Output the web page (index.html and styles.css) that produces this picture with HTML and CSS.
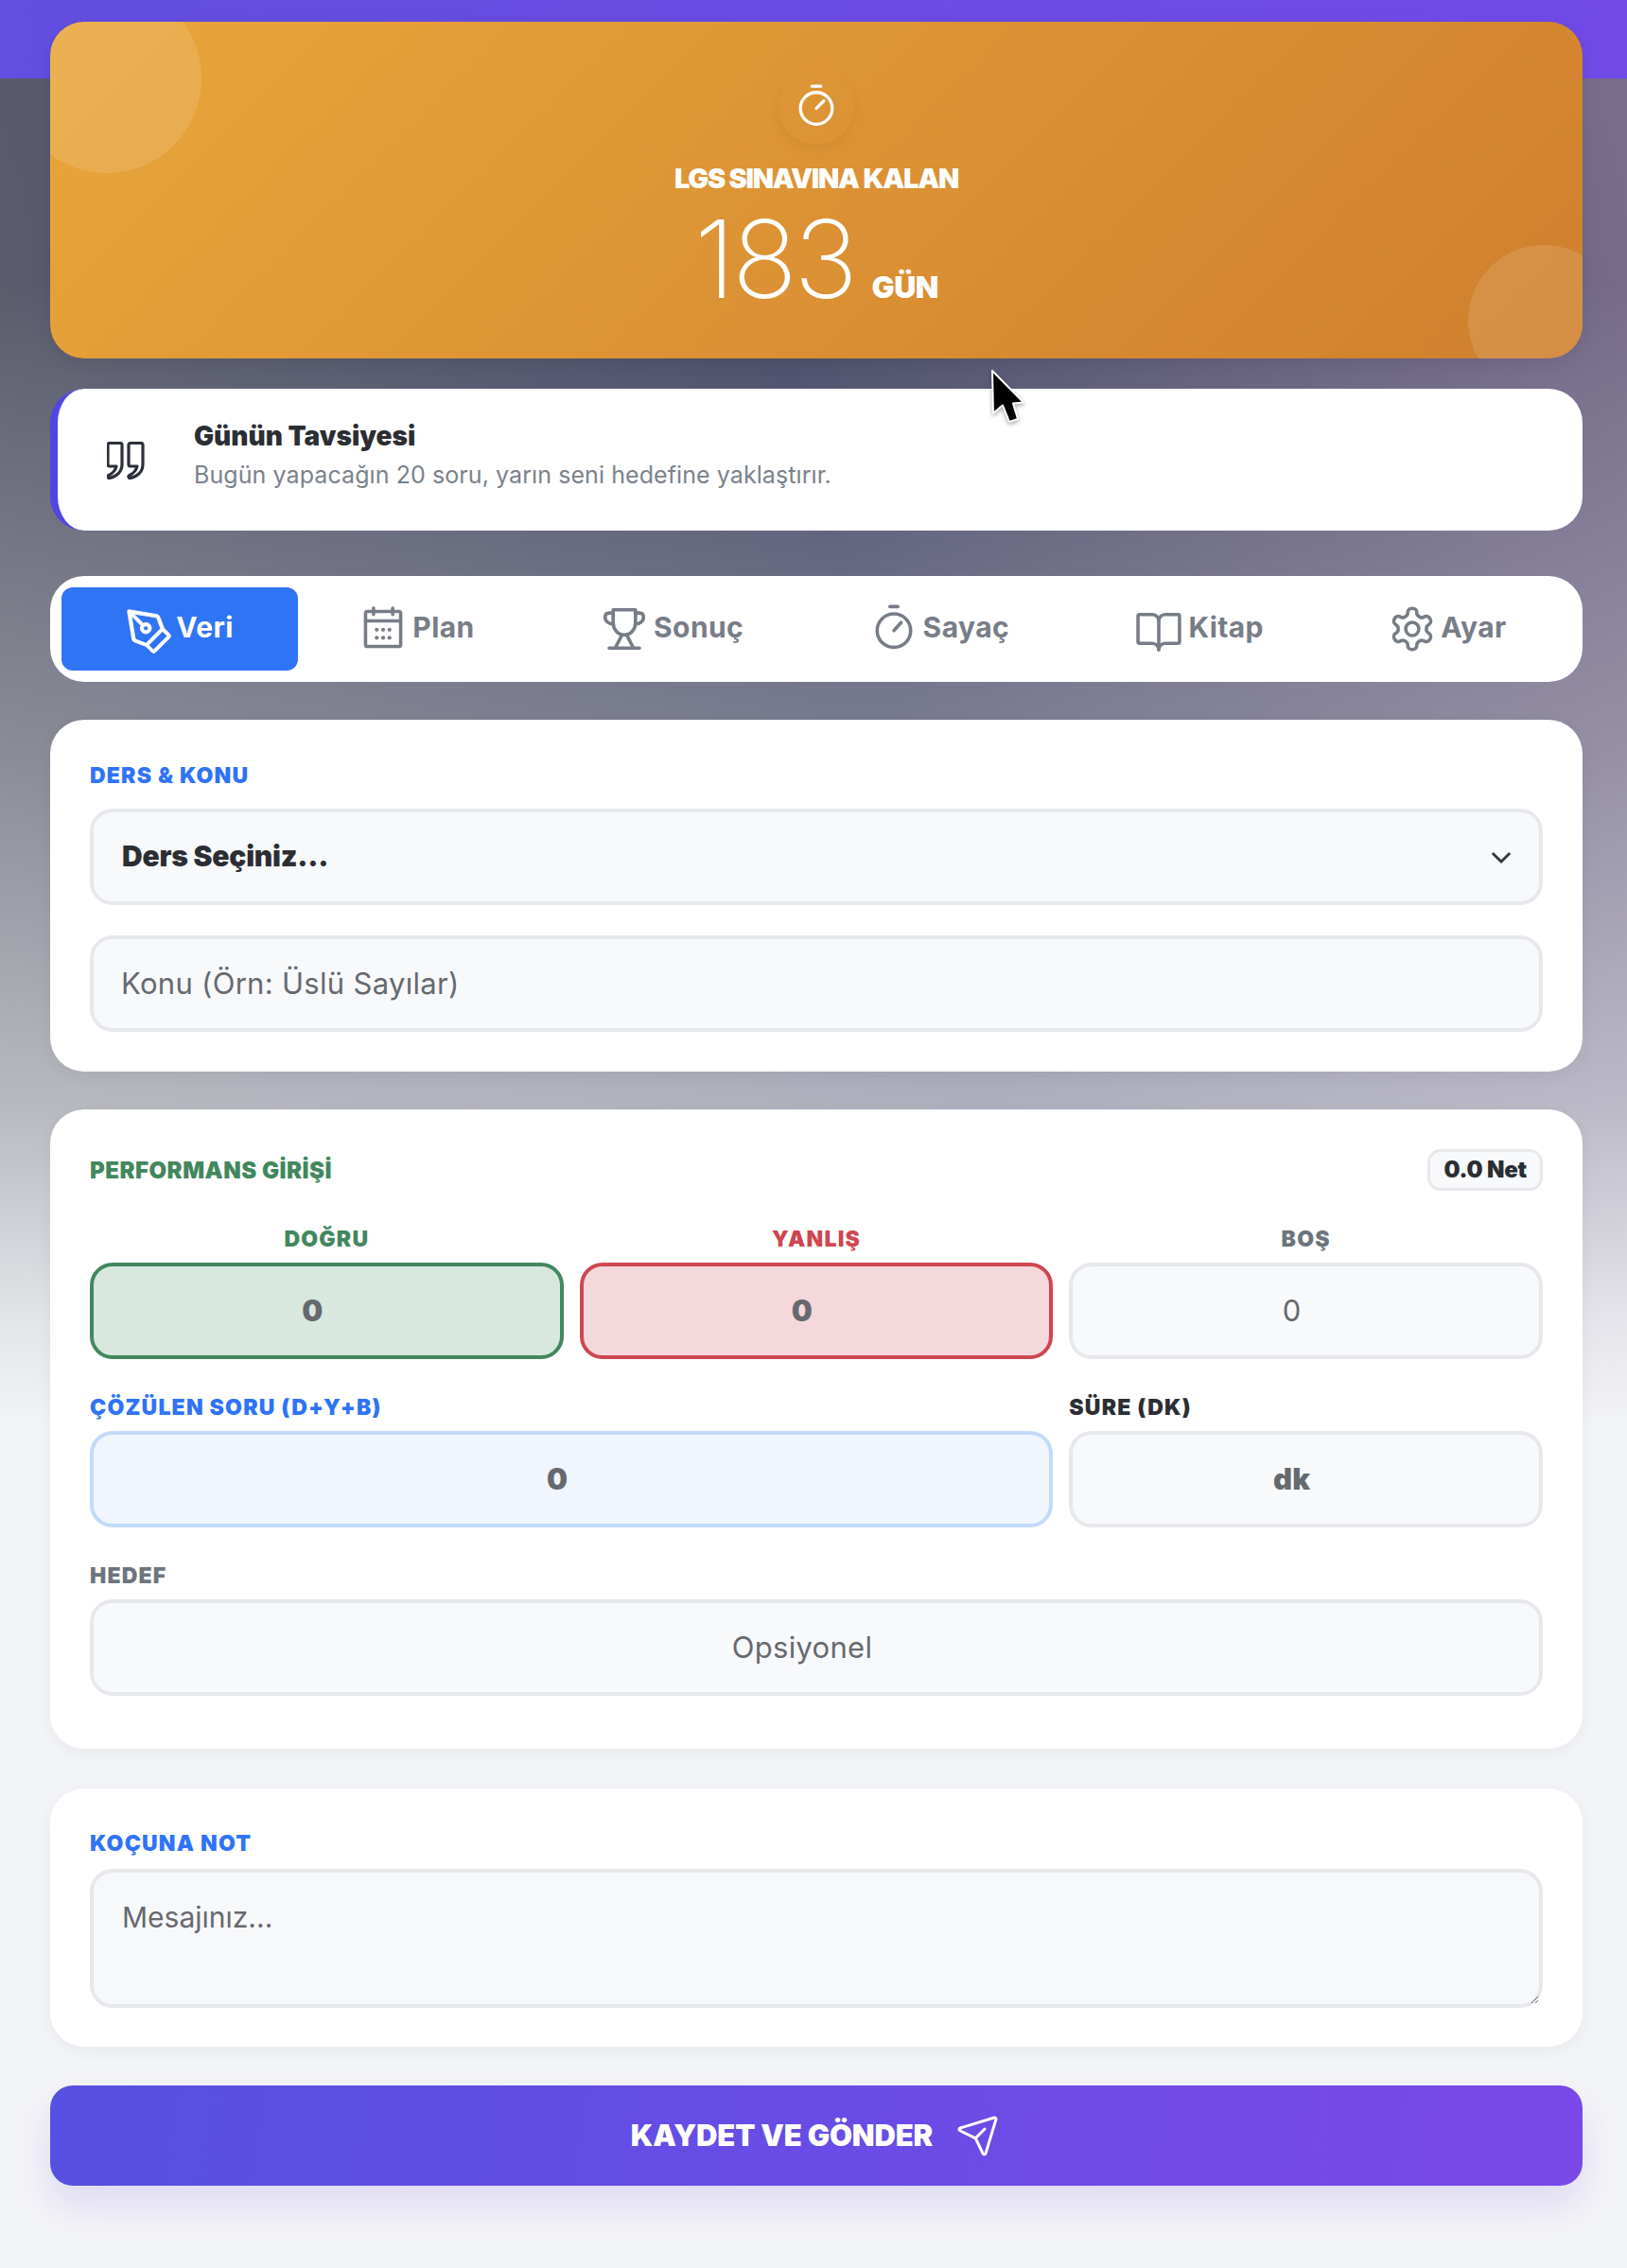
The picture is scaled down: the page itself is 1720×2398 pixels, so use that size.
FILE: index.html
```html
<!DOCTYPE html>
<html lang="tr">
<head>
<meta charset="UTF-8">
<meta name="viewport" content="width=device-width, initial-scale=1">
<title>LGS Takip</title>
<link rel="stylesheet" href="styles.css">
</head>
<body>
<div class="page">

  <section class="hero">
    <span class="blob blob-a"></span>
    <span class="blob blob-b"></span>
    <div class="hero-icon">
      <svg class="ic-hero" viewBox="0 0 256 256"><circle cx="128" cy="136" r="86"/><path d="M128 136l40-40M104 16h48"/></svg>
    </div>
    <div class="hero-label">LGS SINAVINA KALAN</div>
    <div class="hero-count"><span class="hero-num">183</span><span class="hero-unit">GÜN</span></div>
  </section>

  <section class="tip">
    <svg class="ic-quote" viewBox="0 0 40 40">
      <path d="M2.5 1.5H14a2 2 0 0 1 2 2V24C16 32 10 37 3 38.4a1.5 1.5 0 0 1-1-3C6 33.5 9 30.5 10 26H3a2 2 0 0 1-2-2V3.5a2 2 0 0 1 1.5-2z"/>
      <path d="M24.5 1.5H36a2 2 0 0 1 2 2V24C38 32 32 37 25 38.4a1.5 1.5 0 0 1-1-3C28 33.5 31 30.5 32 26H25a2 2 0 0 1-2-2V3.5a2 2 0 0 1 1.5-2z"/>
    </svg>
    <div>
      <div class="tip-title">Günün Tavsiyesi</div>
      <div class="tip-text">Bugün yapacağın 20 soru, yarın seni hedefine yaklaştırır.</div>
    </div>
  </section>

  <nav class="tabs">
    <a class="tab active">
      <svg class="ic ic-fill" viewBox="0 0 256 256"><path transform="rotate(90 128 128)" d="M248,92.68a15.86,15.86,0,0,0-4.69-11.31L174.63,12.68a16,16,0,0,0-22.63,0L123.57,41.11l-58,21.77A16.06,16.06,0,0,0,55.35,75.23L32.11,214.68A8,8,0,0,0,40,224a8.4,8.4,0,0,0,1.32-.11l139.44-23.24a16,16,0,0,0,12.35-10.17l21.77-58L243.31,104A15.87,15.87,0,0,0,248,92.68Zm-69.87,92.19L63.32,204l47.37-47.37a28,28,0,1,0-11.32-11.32L52,192.7,71.13,77.86,126,57.29,198.7,130ZM112,132a12,12,0,1,1,12,12A12,12,0,0,1,112,132Zm96-15.32L139.31,48l24-24L232,92.68Z"/></svg>
      <span class="tab-text">Veri</span>
    </a>
    <a class="tab">
      <svg class="ic" viewBox="0 0 256 256"><rect x="40" y="40" width="176" height="176" rx="10"/><path d="M176 24v32M80 24v32M40 88h176"/><g class="dots"><circle cx="96" cy="132" r="10"/><circle cx="128" cy="132" r="10"/><circle cx="160" cy="132" r="10"/><circle cx="96" cy="172" r="10"/><circle cx="128" cy="172" r="10"/><circle cx="160" cy="172" r="10"/></g></svg>
      <span class="tab-text">Plan</span>
    </a>
    <a class="tab">
      <svg class="ic" viewBox="0 0 256 256"><path d="M72 32H184V96C184 130 160 158 128 158C96 158 72 130 72 96Z"/><path d="M72 48H52C38 48 32 58 32 70C32 90 52 104 72 104M184 48H204C218 48 224 58 224 70C224 90 204 104 184 104"/><path d="M116 158L82 224M140 158L174 224M52 224H204"/></svg>
      <span class="tab-text">Sonuç</span>
    </a>
    <a class="tab">
      <svg class="ic" viewBox="0 0 256 256"><circle cx="128" cy="136" r="84"/><path d="M128 136l36-40M108 16h40"/></svg>
      <span class="tab-text">Sayaç</span>
    </a>
    <a class="tab">
      <svg class="ic" viewBox="0 0 256 256"><path d="M128 88a32 32 0 0 1 32-32h64a8 8 0 0 1 8 8v128a8 8 0 0 1-8 8h-64a32 32 0 0 0-32 32"/><path d="M24 192a8 8 0 0 0 8 8h64a32 32 0 0 1 32 32V88a32 32 0 0 0-32-32H32a8 8 0 0 0-8 8z"/></svg>
      <span class="tab-text">Kitap</span>
    </a>
    <a class="tab">
      <svg class="ic ic-thin" viewBox="0 0 24 24"><path d="M12.22 2h-.44a2 2 0 0 0-2 2v.18a2 2 0 0 1-1 1.73l-.43.25a2 2 0 0 1-2 0l-.15-.08a2 2 0 0 0-2.73.73l-.22.38a2 2 0 0 0 .73 2.73l.15.1a2 2 0 0 1 1 1.72v.51a2 2 0 0 1-1 1.74l-.15.09a2 2 0 0 0-.73 2.73l.22.38a2 2 0 0 0 2.73.73l.15-.08a2 2 0 0 1 2 0l.43.25a2 2 0 0 1 1 1.73V20a2 2 0 0 0 2 2h.44a2 2 0 0 0 2-2v-.18a2 2 0 0 1 1-1.73l.43-.25a2 2 0 0 1 2 0l.15.08a2 2 0 0 0 2.73-.73l.22-.39a2 2 0 0 0-.73-2.73l-.15-.08a2 2 0 0 1-1-1.74v-.5a2 2 0 0 1 1-1.74l.15-.09a2 2 0 0 0 .73-2.73l-.22-.38a2 2 0 0 0-2.73-.73l-.15.08a2 2 0 0 1-2 0l-.43-.25a2 2 0 0 1-1-1.73V4a2 2 0 0 0-2-2z"/><circle cx="12" cy="12" r="3.2"/></svg>
      <span class="tab-text">Ayar</span>
    </a>
  </nav>

  <section class="card card-subject">
    <label class="lbl lbl-blue">DERS &amp; KONU</label>
    <div class="select-wrap">
      <select class="field field-select"><option>Ders Seçiniz...</option></select>
      <svg class="chevron" viewBox="0 0 24 14"><path d="M2 2l10 10L22 2"/></svg>
    </div>
    <input class="field field-left" type="text" placeholder="Konu (Örn: Üslü Sayılar)">
  </section>

  <section class="card card-perf">
    <div class="perf-head">
      <span class="lbl lbl-green lbl-head">PERFORMANS GİRİŞİ</span>
      <span class="net">0.0 Net</span>
    </div>
    <div class="perf-grid">
      <div>
        <label class="lbl lbl-green lbl-mid">DOĞRU</label>
        <input class="field num strong f-green" type="text" placeholder="0">
      </div>
      <div>
        <label class="lbl lbl-red lbl-mid">YANLIŞ</label>
        <input class="field num strong f-red" type="text" placeholder="0">
      </div>
      <div>
        <label class="lbl lbl-gray lbl-mid">BOŞ</label>
        <input class="field num" type="text" placeholder="0">
      </div>
      <div class="span-2">
        <label class="lbl lbl-blue">ÇÖZÜLEN SORU (D+Y+B)</label>
        <input class="field num strong f-blue" type="text" placeholder="0">
      </div>
      <div>
        <label class="lbl lbl-dark">SÜRE (DK)</label>
        <input class="field num strong" type="text" placeholder="dk">
      </div>
      <div class="span-3">
        <label class="lbl lbl-gray">HEDEF</label>
        <input class="field num" type="text" placeholder="Opsiyonel">
      </div>
    </div>
  </section>

  <section class="card card-note">
    <label class="lbl lbl-blue">KOÇUNA NOT</label>
    <textarea class="field note" placeholder="Mesajınız..."></textarea>
  </section>

  <button class="send" type="button">
    KAYDET VE GÖNDER
    <svg class="ic-send" viewBox="0 0 256 256"><path d="M227.32,28.68a16,16,0,0,0-15.66-4.08l-.15,0L19.57,82.84a16,16,0,0,0-2.49,29.8L102,154l41.3,84.87A15.86,15.86,0,0,0,157.74,248q.69,0,1.38-.06a15.88,15.88,0,0,0,14-11.51l58.2-191.94c0-.05,0-.1,0-.15A16,16,0,0,0,227.32,28.68ZM157.83,231.85l-.05.14,0-.07-40.06-82.3,48-48a8,8,0,0,0-11.31-11.31l-48,48L24.08,98.25l-.07,0,.14,0L216,40Z"/></svg>
  </button>

</div>

<svg class="cursor" viewBox="0 0 36 60"><path d="M2 2L3 47L13 38.5L20 56L29 53L24 36.5L35 35.5Z"/></svg>
</body>
</html>
```

FILE: styles.css
```css
* {
  box-sizing: border-box;
}

html, body {
  margin: 0;
  padding: 0;
}

body {
  position: relative;
  min-height: 2398px;
  font-family: Inter, "Noto Sans", sans-serif;
  color: #2b2e33;
  background:
    linear-gradient(90deg, #624ee0, #714ae7) 0 0 / 100% 83px no-repeat,
    linear-gradient(180deg,
      rgba(243,244,247,0) 300px,
      rgba(243,244,247,.3) 800px,
      rgba(243,244,247,.6) 1170px,
      rgba(243,244,247,.9) 1400px,
      #f3f4f7 1510px),
    linear-gradient(75deg, #5f616e 15%, #474a67 58%, #7a6e8c 100%);
}

.page {
  display: flex;
  flex-direction: column;
  padding: 23px 47px 87px 53px;
}

/* hero */
.hero {
  position: relative;
  overflow: hidden;
  height: 356px;
  padding-top: 50px;
  border-radius: 36px;
  color: #fff;
  text-align: center;
  background: linear-gradient(135deg, #e9a63b, #cf7f2d);
  box-shadow: 0 4px 18px rgba(0,0,0,.08);
}

.blob {
  position: absolute;
  border-radius: 50%;
}

.blob-a {
  top: -40px;
  left: -40px;
  width: 200px;
  height: 200px;
  background: rgba(255,255,255,.12);
}

.blob-b {
  right: -39px;
  bottom: -40px;
  width: 160px;
  height: 160px;
  background: rgba(255,255,255,.12);
}

.hero-icon {
  display: flex;
  align-items: center;
  justify-content: center;
  width: 80px;
  height: 80px;
  margin: 0 auto;
  border-radius: 50%;
  box-shadow: 0 5px 12px rgba(150,90,20,.14);
}

.ic-hero {
  width: 50px;
  height: 50px;
  fill: none;
  stroke: #fff;
  stroke-width: 17;
  stroke-linecap: round;
}

.hero-label {
  margin-top: 18px;
  font-size: 29px;
  line-height: 36px;
  font-weight: 900;
  letter-spacing: -1.25px;
}

.hero-count {
  display: flex;
  align-items: baseline;
  justify-content: center;
  margin-top: 2px;
}

.hero-num {
  font-size: 114px;
  line-height: 130px;
  font-weight: 250;
  letter-spacing: -3.5px;
}

.hero-unit {
  margin-left: 18px;
  font-size: 32px;
  font-weight: 900;
  letter-spacing: -.5px;
}

/* tip */
.tip {
  display: flex;
  align-items: center;
  gap: 52px;
  height: 150px;
  margin-top: 32px;
  padding-left: 52px;
  padding-bottom: 12px;
  background: #fff;
  border-left: 8px solid #4f46e5;
  border-radius: 36px;
}

.ic-quote {
  flex: none;
  width: 40px;
  height: 40px;
  margin-top: 14px;
  fill: none;
  stroke: #2b303a;
  stroke-width: 3.2;
  stroke-linejoin: round;
}

.tip-title {
  font-size: 28px;
  line-height: 38px;
  font-weight: 900;
  letter-spacing: 0;
}

.tip-text {
  margin-top: 5px;
  font-size: 25px;
  line-height: 34px;
  letter-spacing: .08px;
  color: #7a828c;
}

/* tabs */
.tabs {
  display: flex;
  margin-top: 48px;
  padding: 12px;
  background: #fff;
  border-radius: 36px;
}

.tab {
  flex: 1 1 auto;
  display: flex;
  align-items: center;
  justify-content: center;
  gap: 4px;
  height: 88px;
  padding-right: 5px;
  border-radius: 12px;
  font-size: 30px;
  font-weight: 650;
  letter-spacing: .4px;
  color: #777d87;
}

.tab-text {
  padding-bottom: 5px;
}

.tab.active {
  background: #3074f6;
  color: #fff;
}

.ic {
  flex: none;
  width: 54px;
  height: 54px;
  fill: none;
  stroke: currentColor;
  stroke-width: 17;
  stroke-linecap: round;
  stroke-linejoin: round;
}

.ic-fill {
  fill: currentColor;
  stroke: currentColor;
  stroke-width: 4;
}

.ic-thin {
  width: 52px;
  height: 52px;
  stroke-width: 1.65;
}

.dots circle {
  fill: currentColor;
  stroke: none;
}

/* cards */
.card {
  padding: 42px 42px 43px;
  background: #fff;
  border-radius: 36px;
  box-shadow: 0 4px 18px rgba(0,0,0,.05);
}

.card-subject {
  margin-top: 40px;
  padding-bottom: 42px;
}

.card-perf {
  margin-top: 40px;
  padding-bottom: 56px;
}

.card-note {
  margin-top: 42px;
  padding-top: 38px;
  padding-bottom: 41px;
}

.lbl {
  display: block;
  margin-bottom: 10px;
  font-size: 23px;
  line-height: 35px;
  font-weight: 900;
  letter-spacing: 1.2px;
}

.card-subject .lbl {
  margin-bottom: 17px;
}

.card-note .lbl {
  margin-bottom: 9px;
  padding-top: 3px;
}

.perf-grid .lbl {
  margin-bottom: 7px;
  padding-top: 3px;
}

.lbl-blue { color: #2f73f6; }
.lbl-green { color: #42875d; }
.lbl-red { color: #cf4650; }
.lbl-gray { color: #6c757d; }
.lbl-dark { color: #2b2e33; }

.lbl-mid {
  text-align: center;
}

.field {
  display: block;
  width: 100%;
  height: 102px;
  padding: 0 29px 2px;
  border: 4px solid #e7e8eb;
  border-radius: 24px;
  outline: none;
  background: #f8f9fb;
  font-family: inherit;
  font-size: 31px;
  letter-spacing: .3px;
  color: #2b2e33;
}

.field::placeholder {
  color: #66696e;
  opacity: 1;
}

.field-left {
  margin-top: 32px;
}

.select-wrap {
  position: relative;
}

.field-select {
  appearance: none;
  padding-left: 30px;
  font-size: 30px;
  font-weight: 900;
  letter-spacing: -.2px;
}

.chevron {
  position: absolute;
  top: 45px;
  right: 33px;
  width: 22px;
  height: 13px;
  fill: none;
  stroke: #33363b;
  stroke-width: 3;
}

.perf-head {
  display: flex;
  align-items: center;
  justify-content: space-between;
  height: 44px;
  margin-bottom: 31px;
}

.lbl-head {
  margin: 0;
  font-size: 24px;
  letter-spacing: .5px;
}

.net {
  padding: 0 14px;
  border: 3px solid #e7e8eb;
  border-radius: 14px;
  background: #f8f9fa;
  font-size: 24px;
  line-height: 38px;
  font-weight: 900;
  letter-spacing: -.2px;
}

.perf-grid {
  display: grid;
  grid-template-columns: repeat(3, 1fr);
  gap: 31px 17px;
}

.span-2 { grid-column: span 2; }
.span-3 { grid-column: span 3; }

.num {
  padding: 0 30px 2px 0;
  text-align: center;
}

.strong::placeholder {
  font-weight: 900;
}

.f-green {
  background: #d8e8de;
  border-color: #42875d;
}

.f-red {
  background: #f5d8dc;
  border-color: #cf4650;
}

.f-blue {
  background: #f0f5fe;
  border-color: #c2dafa;
}

.note {
  height: 147px;
  padding: 25px 30px;
  resize: vertical;
  background: #f7f8fa;
  font-size: 30px;
  letter-spacing: 0;
  line-height: 44px;
}

/* send */
.send {
  display: flex;
  align-items: center;
  justify-content: center;
  gap: 25px;
  width: 100%;
  height: 106px;
  margin-top: 41px;
  padding: 0 0 2px;
  border: 0;
  border-radius: 24px;
  background: linear-gradient(100deg, #5650e2, #7b48e8);
  box-shadow: 0 20px 40px rgba(110,70,220,.15);
  font-family: inherit;
  font-size: 31px;
  font-weight: 900;
  letter-spacing: -.15px;
  color: #fff;
}

.ic-send {
  width: 48px;
  height: 48px;
  fill: #fff;
}

/* screen capture pointer */
.cursor {
  position: absolute;
  top: 390px;
  left: 1047px;
  width: 36px;
  height: 60px;
  fill: #000;
  stroke: #fff;
  stroke-width: 2;
  stroke-linejoin: round;
  filter: drop-shadow(0 2px 2px rgba(0,0,0,.35));
}
```
